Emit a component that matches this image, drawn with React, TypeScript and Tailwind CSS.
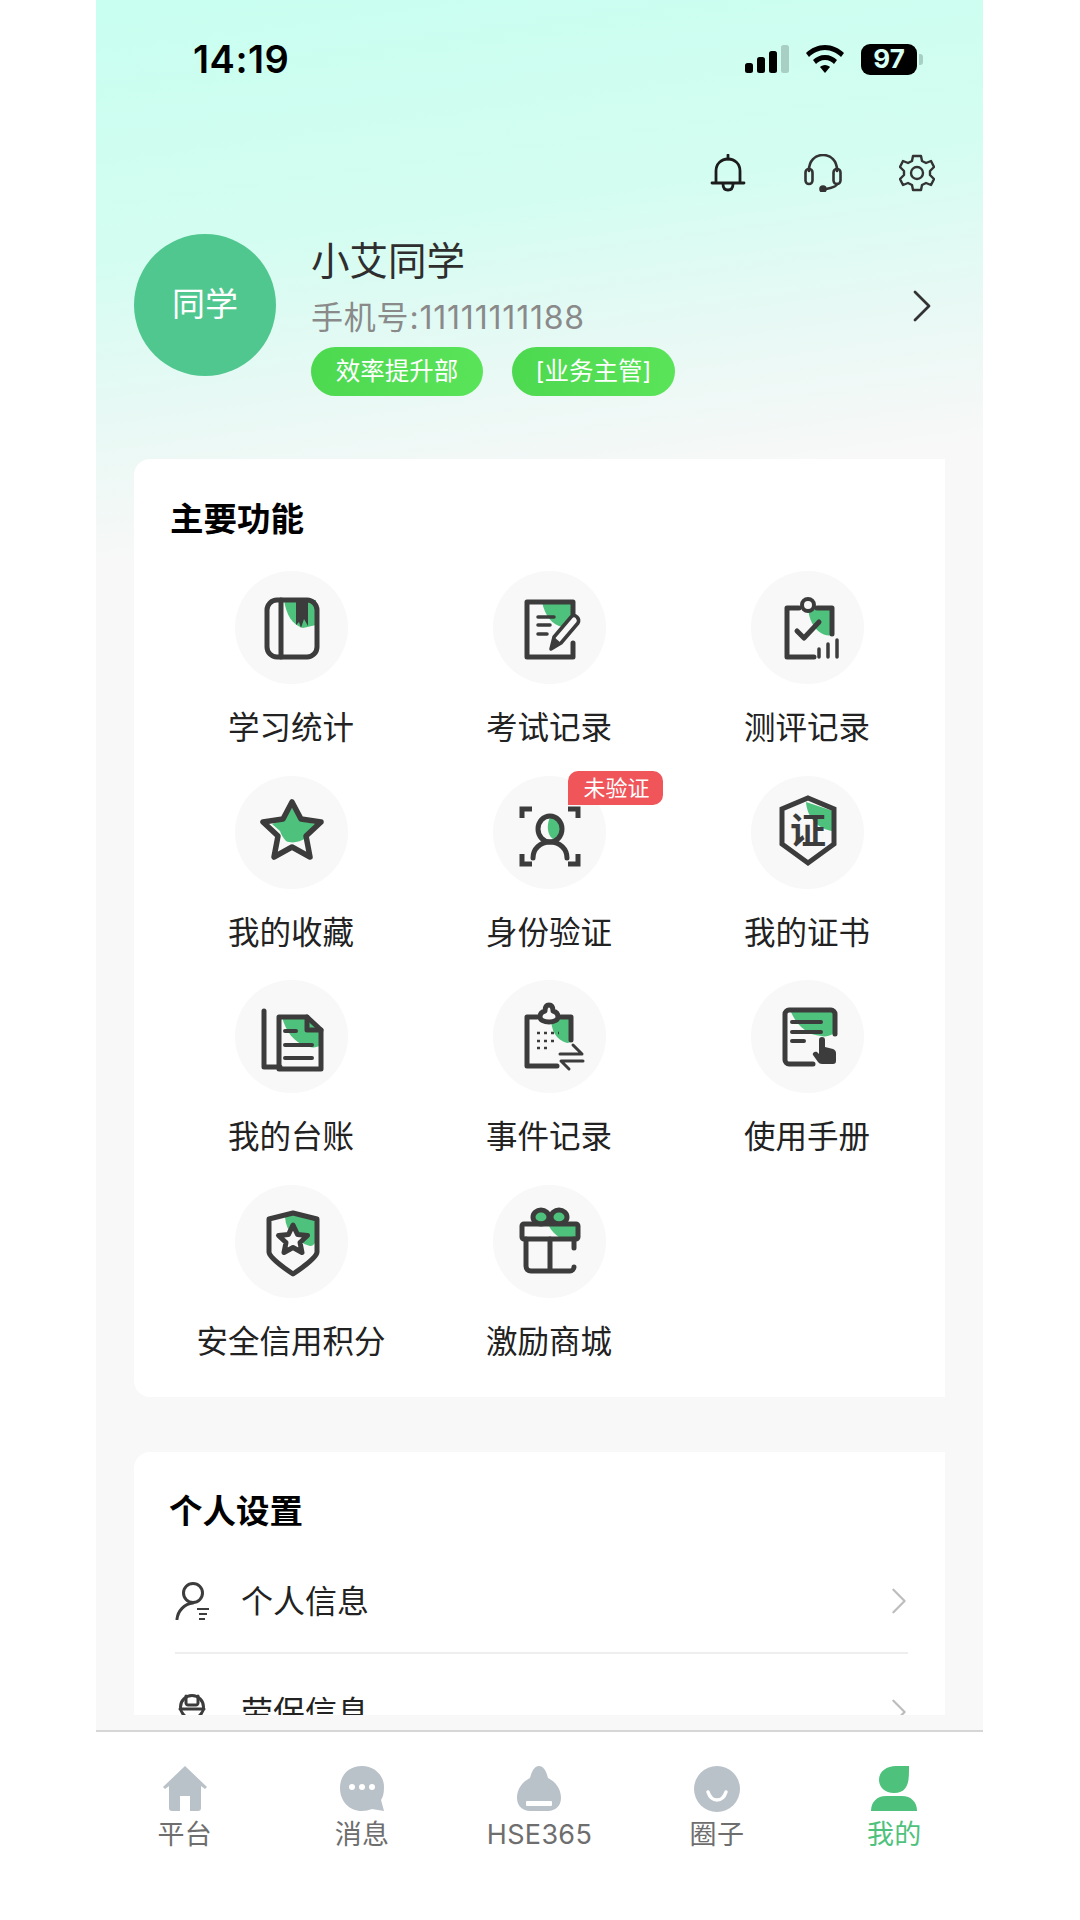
import type { ReactNode } from "react";

const INK = "#3c3c3c";
const GREEN = "#4ec27c";

function Glyph({ children }: { children: ReactNode }) {
  return (
    <svg viewBox="0 0 113 113" className="w-[113px] h-[113px]" fill="none" stroke={INK} strokeWidth="5" strokeLinecap="round" strokeLinejoin="round">
      {children}
    </svg>
  );
}

const BookIcon = () => (
  <Glyph>
    <path d="M49 29c2 14 8 25 19 28l13-3V29z" fill={GREEN} stroke="none" />
    <path d="M61 29h12v26l-4-7-3 9-2-6-3 3z" fill={INK} stroke="none" />
    <rect x="32" y="29" width="50" height="57" rx="10" />
    <path d="M46 29v57" />
  </Glyph>
);

const ExamIcon = () => (
  <Glyph>
    <path d="M49 31h29v16c-2 5-5 8-8 9-11-2-18-11-21-25z" fill={GREEN} stroke="none" />
    <path d="M80 46V31H34v55h46V72" />
    <path d="M45 46h16M45 54h12M45 63h9" strokeWidth="3.5" />
    <path d="M58 78l3-12 17-20c2-2 4-2 6 0s2 4 1 6L68 72z" fill="#f8f8f8" strokeWidth="3.5" />
    <path d="M58 78l3-12 7 6z" fill={INK} stroke="none" />
  </Glyph>
);

const EvalIcon = () => (
  <Glyph>
    <path d="M57 37h24v27c-4 1-8 0-11-2-8-5-12-14-13-25z" fill={GREEN} stroke="none" />
    <path d="M48 37H36v49h27M66 37h15v26" />
    <circle cx="57" cy="34" r="6" fill="#f8f8f8" strokeWidth="4" />
    <path d="M46 60l7 7 15-16" />
    <path d="M68 86v-8M77 86V73M86 86V69" strokeWidth="3.5" />
  </Glyph>
);

const StarIcon = () => (
  <Glyph>
    <path d="M57 31l8 14 16 3c1 4-5 10-10 14-6 4-14 6-20 3-3-3-5-7-6-10l-8-7 13-5z" fill={GREEN} stroke="none" />
    <path d="M57 26l9 17 20 3-15 14 4 21-18-10-18 10 4-21-15-14 20-3z" strokeWidth="5.500" />
  </Glyph>
);

const FaceIcon = () => (
  <Glyph>
    <path d="M29 42V33h10M75 33h10v9M29 78v10h10M75 88h10V78" strokeLinecap="butt" strokeLinejoin="miter" />
    <path d="M57 41c7 0 12 6 12 13 0 5-2 9-5 11-8-2-12-12-7-24z" fill={GREEN} stroke="none" />
    <ellipse cx="57" cy="53" rx="12" ry="13" />
    <path d="M40 82c0-9 7-16 17-16s17 7 17 16" />
  </Glyph>
);

const CertIcon = () => (
  <Glyph>
    <path d="M55 26l27 9v20c-14-1-26-13-27-29z" fill={GREEN} stroke="none" />
    <path d="M57 22l26 11v35L57 87 31 68V33z" strokeLinejoin="miter" />
    <text x="57" y="68" textAnchor="middle" fontSize="36" fontWeight="700" fill={INK} stroke="none" fontFamily="Noto Sans CJK SC, sans-serif">证</text>
  </Glyph>
);

const LedgerIcon = () => (
  <Glyph>
    <path d="M47 37h26l13 13v15c-4 3-10 3-15 1-12-4-20-14-24-29z" fill={GREEN} stroke="none" />
    <path d="M29 31v56h16" />
    <path d="M72 37H44v52h42V50z" />
    <path d="M72 37v13h14" />
    <path d="M50 51h11M50 65h27M50 78h27" strokeWidth="4" />
  </Glyph>
);

const EventIcon = () => (
  <Glyph>
    <path d="M58 38h21v22c-1 2-3 3-5 3-11-3-16-13-16-25z" fill={GREEN} stroke="none" />
    <path d="M44 37H34v49h30M68 37h10v23" />
    <path d="M56 25c3 0 4 3 4 6 4 1 5 4 5 6 0 3-4 5-9 5s-9-2-9-5c0-2 1-5 5-6 0-3 1-6 4-6z" fill="#f8f8f8" />
    <path d="M44 53h22M44 61h20M44 68h12" strokeWidth="2.500" strokeDasharray="3 4" strokeLinecap="butt" />
    <path d="M67 74h22l-9-9M90 81H68l8 8" strokeWidth="3" />
  </Glyph>
);

const ManualIcon = () => (
  <Glyph>
    <path d="M40 32h42v22c-4 2-8 3-12 2-13-1-24-10-30-24z" fill={GREEN} stroke="none" />
    <path d="M62 84H38c-2 0-4-2-4-4V34c0-2 2-4 4-4h42c2 0 4 2 4 4v20" />
    <path d="M41 42h29M41 52h29M41 61h12" strokeWidth="4" />
    <path d="M68 60c0-2 1-3 3-3s3 1 3 3v7l8 2c2 1 3 2 3 4v8c0 2-1 3-3 3H71c-2 0-3-1-4-2l-5-7c-1-2 2-4 4-3l2 2z" fill={INK} stroke="none" />
  </Glyph>
);

const CreditIcon = () => (
  <Glyph>
    <path d="M50 32l8-3 23 6v20c-1 4-3 6-6 6-14-4-24-14-25-29z" fill={GREEN} stroke="none" />
    <path d="M58 28l24 6v33c0 5-15 16-24 22-9-6-24-17-24-22V34z" />
    <path d="M58 40l4.500 9.500 10 1-7.500 7 2 10-9-5-9 5 2-10-7.500-7 10-1z" fill="#f8f8f8" />
  </Glyph>
);

const GiftIcon = () => (
  <Glyph>
    <ellipse cx="48" cy="32" rx="8" ry="7" fill={GREEN} />
    <ellipse cx="66" cy="32" rx="8" ry="7" fill={GREEN} />
    <path d="M55 39h30v15H70c-7-3-12-8-15-15z" fill={GREEN} stroke="none" />
    <rect x="29" y="39" width="56" height="15" rx="2" />
    <path d="M81 54v9M33 54v27c0 3 2 5 5 5h39c2 0 4-2 4-4M57 54v32" />
  </Glyph>
);

const features: { label: string; icon: ReactNode; badge?: string }[] = [
  { label: "学习统计", icon: <BookIcon /> },
  { label: "考试记录", icon: <ExamIcon /> },
  { label: "测评记录", icon: <EvalIcon /> },
  { label: "我的收藏", icon: <StarIcon /> },
  { label: "身份验证", icon: <FaceIcon />, badge: "未验证" },
  { label: "我的证书", icon: <CertIcon /> },
  { label: "我的台账", icon: <LedgerIcon /> },
  { label: "事件记录", icon: <EventIcon /> },
  { label: "使用手册", icon: <ManualIcon /> },
  { label: "安全信用积分", icon: <CreditIcon /> },
  { label: "激励商城", icon: <GiftIcon /> },
];

const tabIconClass = "w-[48px] h-[46px]";

const tabs: { label: string; active?: boolean; icon: ReactNode }[] = [
  {
    label: "平台",
    icon: (
      <svg viewBox="0 0 48 46" className={tabIconClass}>
        <path d="M24 0l22 21-2 2-4-3v22c0 2-1 3-3 3h-8V30H19v15h-8c-2 0-3-1-3-3V20l-4 3-2-2z" fill="#b9c1c9" />
      </svg>
    ),
  },
  {
    label: "消息",
    icon: (
      <svg viewBox="0 0 48 46" className={tabIconClass}>
        <path d="M24 0c12 0 22 9 22 21 0 6-1 10-3 13l3 11-12-2c-3 1-7 2-10 2C11 45 2 35 2 22S11 0 24 0z" fill="#b9c1c9" />
        <circle cx="14" cy="21" r="3" fill="#fff" />
        <circle cx="24" cy="21" r="3" fill="#fff" />
        <circle cx="34" cy="21" r="3" fill="#fff" />
      </svg>
    ),
  },
  {
    label: "HSE365",
    icon: (
      <svg viewBox="0 0 48 46" className={tabIconClass}>
        <path d="M24 0c4 0 7 4 9 12 8 4 13 11 13 20 0 8-6 13-13 13H15C8 45 2 40 2 32c0-9 5-16 13-20 2-8 5-12 9-12z" fill="#b9c1c9" />
        <rect x="11" y="35" width="26" height="5" rx="1" fill="#fff" />
      </svg>
    ),
  },
  {
    label: "圈子",
    icon: (
      <svg viewBox="0 0 48 46" className={tabIconClass}>
        <circle cx="24" cy="23" r="23" fill="#b9c1c9" />
        <path d="M15 26c2 6 5 8 9 8s7-2 9-8" fill="none" stroke="#fff" strokeWidth="3.500" strokeLinecap="round" />
      </svg>
    ),
  },
  {
    label: "我的",
    active: true,
    icon: (
      <svg viewBox="0 0 48 46" className={tabIconClass}>
        <path d="M39 0c0 12 1 27-15 27C15 27 9 21 9 14 9 5 17 0 26 0z" fill={GREEN} />
        <path d="M1 45c0-9 6-15 15-15h16c9 0 15 6 15 15z" fill={GREEN} />
      </svg>
    ),
  },
];

function Chevron({ color, className }: { color: string; className: string }) {
  return (
    <svg viewBox="0 0 20 32" className={className} fill="none" stroke={color} strokeWidth="2.800" strokeLinecap="round" strokeLinejoin="round">
      <path d="M3 2l14 14L3 30" />
    </svg>
  );
}

export default function App() {
  return (
    <div className="w-[1080px] h-[1920px] bg-white overflow-hidden font-['Inter','Noto_Sans_CJK_SC',sans-serif]">
      <div className="ml-[96px] w-[887px] h-full flex flex-col overflow-hidden bg-[#f8f8f8]">
        <main className="h-[1715px] shrink-0 overflow-hidden bg-[linear-gradient(172deg,#c8fff0_0px,#d4fdf1_260px,#e6f9f4_400px,#f8f8f8_560px)]">
          {/* status bar */}
          <div className="h-[118px] flex items-center justify-between pl-[97px] pr-[60px]">
            <span className="text-[38px] font-semibold text-black tracking-[0.5px]">14:19</span>
            <div className="flex items-center gap-[17px]">
              <svg viewBox="0 0 44 28" className="w-[44px] h-[28px]">
                <rect x="0" y="18" width="8" height="10" rx="2.500" fill="#000" />
                <rect x="12" y="12" width="8" height="16" rx="2.500" fill="#000" />
                <rect x="24" y="6" width="8" height="22" rx="2.500" fill="#000" />
                <rect x="36" y="0" width="8" height="28" rx="2.500" fill="#a9cec4" />
              </svg>
              <svg viewBox="0 0 38 28" className="w-[38px] h-[28px]">
                <path d="M19 0c7 0 14 3 19 8l-3 4C31 8 25 5 19 5S7 8 3 12L0 8c5-5 12-8 19-8z" fill="#000" />
                <path d="M19 10c5 0 9 2 12 5l-3 4c-2-2-5-4-9-4s-7 2-9 4l-3-4c3-3 7-5 12-5z" fill="#000" />
                <path d="M19 20c2 0 4 1 5 2l-5 6-5-6c1-1 3-2 5-2z" fill="#000" />
              </svg>
              <div className="flex items-center gap-[2px]">
                <div className="w-[56px] h-[31px] rounded-[9px] bg-black flex items-center justify-center text-[26px] font-bold leading-none text-[#d8fff4]">97</div>
                <div className="w-[4px] h-[11px] rounded-r-[3px] bg-[#a9cec4]" />
              </div>
            </div>
          </div>

          {/* toolbar */}
          <div className="mt-[36px] h-[38px] flex justify-end items-center gap-[57px] pr-[48px]">
            <svg viewBox="0 0 36 38" className="w-[36px] h-[38px] mr-[1px]" fill="none" stroke="#1c1c1c" strokeWidth="2.800" strokeLinecap="round" strokeLinejoin="round">
              <path d="M18 1v4" />
              <path d="M2 29h32M6 29V17C6 10 11 5 18 5s12 5 12 12v12" />
              <path d="M13 30c0 4 2 6 5 6s5-2 5-6" />
            </svg>
            <svg viewBox="0 0 38 38" className="w-[38px] h-[38px]" fill="none" stroke="#333" strokeWidth="2.600" strokeLinecap="round" strokeLinejoin="round">
              <path d="M5 17v-1C5 7 11 1 19 1s14 6 14 15v1" />
              <rect x="1.500" y="15" width="7" height="15" rx="3.500" />
              <rect x="29.500" y="15" width="7" height="15" rx="3.500" />
              <path d="M33 30c0 2-6 4-11 5" />
              <circle cx="19" cy="35" r="2.500" fill="#333" />
            </svg>
            <svg viewBox="0 0 36 38" className="w-[36px] h-[38px]" fill="none" stroke="#333" strokeWidth="2.400" strokeLinejoin="round">
              <path d="M14 2h8l1 5 4 2 5-2 3 6-4 4v4l4 4-3 6-5-2-4 2-1 5h-8l-1-5-4-2-5 2-3-6 4-4v-4l-4-4 3-6 5 2 4-2z" />
              <circle cx="18" cy="19" r="6" />
            </svg>
          </div>

          {/* profile */}
          <div className="mt-[42px] flex pl-[38px] pr-[51px]">
            <div className="w-[142px] h-[142px] rounded-full bg-[#50c78e] flex items-center justify-center text-[33px] text-white shrink-0">同学</div>
            <div className="ml-[35px] flex flex-col items-start">
              <div className="mt-[5px] text-[38.500px] leading-[44px] text-[#2e2e2e]">小艾同学</div>
              <div className="mt-[15px] text-[32px] leading-[40px] tracking-[0.8px] text-[#8a8a8a]">手机号:11111111188</div>
              <div className="mt-[9px] flex gap-[29px]">
                <span className="w-[172px] h-[49px] rounded-full bg-[linear-gradient(100deg,#4cd84f,#5ae45a)] flex items-center justify-center text-[24.500px] text-white">效率提升部</span>
                <span className="w-[163px] h-[49px] rounded-full bg-[linear-gradient(100deg,#4cd84f,#5ae45a)] flex items-center justify-center text-[24.500px] text-white">[业务主管]</span>
              </div>
            </div>
            <Chevron color="#333" className="ml-auto mt-[56px] w-[20px] h-[32px]" />
          </div>

          {/* main features */}
          <section className="mt-[63px] ml-[38px] w-[811px] rounded-l-[16px] bg-white pt-[38px] pb-[7px]">
            <h2 className="pl-[36px] text-[33.500px] leading-[44px] font-bold text-black">主要功能</h2>
            <div className="mt-[30px] ml-[28px] w-[774px] grid grid-cols-3 auto-rows-[204.670px]">
              {features.map((f) => (
                <div key={f.label} className="flex flex-col items-center">
                  <div className="relative w-[113px] h-[113px] rounded-full bg-[#f8f8f8]">
                    {f.icon}
                    {f.badge && (
                      <span className="absolute left-[75px] -top-[5px] w-[95px] h-[34px] pl-[16px] rounded-t-[10px] rounded-br-[10px] bg-[#f0555a] text-[22px] leading-[34px] text-white whitespace-nowrap">
                        {f.badge}
                      </span>
                    )}
                  </div>
                  <div className="mt-[22px] text-[31.500px] leading-[44px] text-[#222]">{f.label}</div>
                </div>
              ))}
            </div>
          </section>

          {/* personal settings */}
          <section className="mt-[55px] ml-[38px] w-[811px] rounded-tl-[16px] bg-white pt-[37px]">
            <h2 className="pl-[35px] text-[33.500px] leading-[44px] font-bold text-black">个人设置</h2>
            <div className="mt-[17px] mx-[41px] w-[733px]">
              <div className="h-[104px] flex items-center border-b-2 border-[#eeeeee]">
                <svg viewBox="0 0 36 38" className="w-[36px] h-[38px]" fill="none" stroke="#3c3c3c" strokeWidth="3" strokeLinecap="round">
                  <circle cx="18" cy="11" r="9.500" />
                  <path d="M2 37c1-8 7-15 16-16" />
                  <path d="M22 27h12M24 32h8M24 37h6" strokeWidth="2.200" strokeLinecap="butt" />
                </svg>
                <span className="ml-[30px] mt-[2px] text-[32px] text-[#222]">个人信息</span>
                <Chevron color="#bdbdbd" className="ml-auto mr-[1px] w-[16px] h-[28px]" />
              </div>
              <div className="h-[116px] flex items-center">
                <svg viewBox="0 0 36 38" className="w-[36px] h-[38px]" fill="none" stroke="#3c3c3c" strokeWidth="3" strokeLinecap="round">
                  <circle cx="17" cy="14" r="11.500" />
                  <path d="M11 3v7c0 1 1 2 2 2h8c1 0 2-1 2-2V3" />
                  <path d="M5 16h24" />
                </svg>
                <span className="ml-[30px] mt-[2px] text-[32px] text-[#222]">劳保信息</span>
                <Chevron color="#bdbdbd" className="ml-auto mr-[1px] w-[16px] h-[28px]" />
              </div>
            </div>
          </section>
        </main>

        <div className="h-[15px] shrink-0" />

        {/* tab bar */}
        <nav className="flex-1 border-t-2 border-[#d6d6d6] bg-white pt-[34px] grid grid-cols-5 content-start">
          {tabs.map((t) => (
            <div key={t.label} className="flex flex-col items-center">
              {t.icon}
              <span className={`mt-[5px] text-[27px] leading-[36px] tracking-[0.3px] ${t.active ? "text-[#4ec27c]" : "text-[#6e6e6e]"}`}>{t.label}</span>
            </div>
          ))}
        </nav>
      </div>
    </div>
  );
}
